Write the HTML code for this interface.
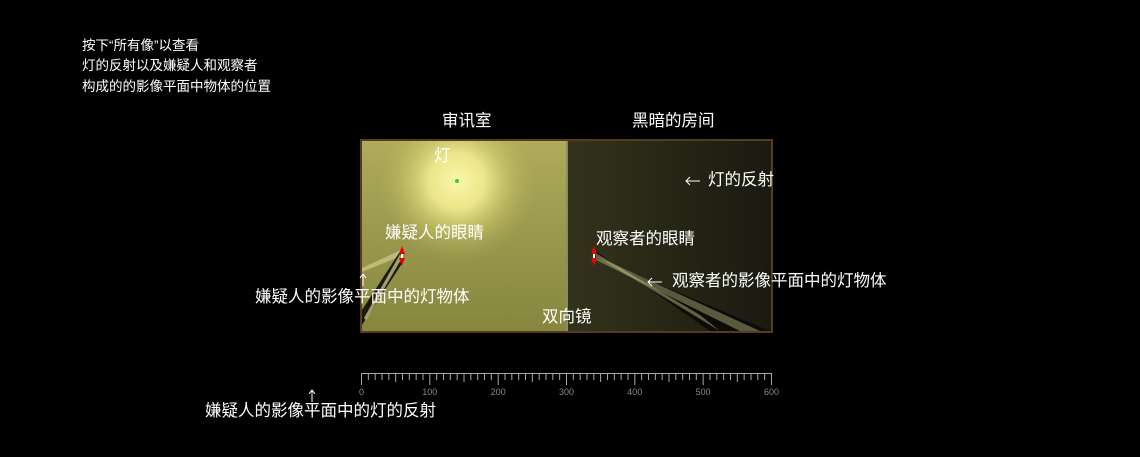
<!DOCTYPE html>
<html><head><meta charset="utf-8"><style>
html,body{margin:0;padding:0;background:#000;width:1140px;height:457px;overflow:hidden}
body{font-family:"Liberation Sans","Noto Sans CJK SC",sans-serif;color:#fff}
</style></head><body>
<svg width="1140" height="457" xmlns="http://www.w3.org/2000/svg" style="position:absolute;left:0;top:0">
<defs>
<radialGradient id="glow" cx="457" cy="181" r="80" gradientUnits="userSpaceOnUse">
<stop offset="0" stop-color="#fbf6a8"/><stop offset="0.35" stop-color="#ebe68a"/><stop offset="0.7" stop-color="#c8c46a" stop-opacity="0.5"/><stop offset="1" stop-color="#b0ad5c" stop-opacity="0"/>
</radialGradient>
<linearGradient id="lp" x1="0" y1="0" x2="0" y2="1">
<stop offset="0" stop-color="#aeab5a"/><stop offset="1" stop-color="#86863f"/>
</linearGradient>
<linearGradient id="rp" x1="0" y1="0" x2="1" y2="0">
<stop offset="0" stop-color="#33331c"/><stop offset="1" stop-color="#1a1a10"/>
</linearGradient>
</defs>
<g font-size="13.5" fill="#fff">
<text x="82" y="50">按下“所有像”以查看</text>
<text x="82" y="70">灯的反射以及嫌疑人和观察者</text>
<text x="82" y="91">构成的的影像平面中物体的位置</text>
</g>
<g font-size="16.5" fill="#fff">
<text x="442" y="126">审讯室</text>
<text x="632" y="126">黑暗的房间</text>
</g>
<rect x="361" y="140" width="411" height="192" fill="#2a1a0e" stroke="#5a3a1e" stroke-width="2"/>
<rect x="362" y="141" width="205" height="190" fill="url(#lp)"/>
<rect x="362" y="141" width="205" height="190" fill="url(#glow)"/>
<rect x="567" y="141" width="204" height="190" fill="url(#rp)"/>
<line x1="567" y1="141" x2="567" y2="331" stroke="#8a8a6a" stroke-width="2"/>
<polygon points="401,250 362,268 362,272 401,256" fill="#d8d69a" opacity="0.6"/>
<polygon points="401,250 362,310 362,325 403,262" fill="#1a1a0c"/>
<polygon points="400,254 364,318 366,320 402,258" fill="#d8d69a" opacity="0.7"/>
<polygon points="594,250 710,331 770,331 596,258" fill="#0c0c06"/>
<polygon points="594,252 700,315 720,331 596,256" fill="#c8c68a" opacity="0.45"/>
<polygon points="596,256 760,331 740,331 596,260" fill="#d0ce90" opacity="0.4"/>
<circle cx="457" cy="181" r="2" fill="#3c3"/>
<g fill="#e00">
<polygon points="402,246 399,254 405,254"/><polygon points="402,266 399,258 405,258"/>
<polygon points="594,246 591,254 597,254"/><polygon points="594,266 591,258 597,258"/>
</g>
<rect x="401" y="254" width="2" height="4" fill="#fff"/><rect x="593" y="254" width="2" height="4" fill="#fff"/>
<g font-size="16.5" fill="#fff">
<text x="434" y="161">灯</text>
<text x="708" y="185">灯的反射</text>
<text x="385" y="238">嫌疑人的眼睛</text>
<text x="596" y="244">观察者的眼睛</text>
<text x="255" y="302">嫌疑人的影像平面中的灯物体</text>
<text x="672" y="286">观察者的影像平面中的灯物体</text>
<text x="542" y="322">双向镜</text>
<text x="205" y="416">嫌疑人的影像平面中的灯的反射</text>
</g>
<g stroke="#fff" stroke-width="1" fill="none">
<path d="M700 181 H686 M690 177 L686 181 L690 185"/>
<path d="M662 282 H648 M652 278 L648 282 L652 286"/>
<path d="M363 286 V274 M360 278 L363 274 L366 278"/>
<path d="M312 402 V390 M309 394 L312 390 L315 394"/>
</g>
<g stroke="#aaa" stroke-width="1" id="ruler">
<line x1="361" y1="373.5" x2="771" y2="373.5"/>
</g>
<g font-size="9" fill="#888" text-anchor="middle">
<text x="361.5" y="395">0</text><text x="429.8" y="395">100</text><text x="498.1" y="395">200</text><text x="566.5" y="395">300</text><text x="634.8" y="395">400</text><text x="703.1" y="395">500</text><text x="771.5" y="395">600</text>
</g>
<script>
var g=document.getElementById('ruler'),ns='http://www.w3.org/2000/svg';
for(var i=0;i<=60;i++){var x=361.5+i*6.833;var l=document.createElementNS(ns,'line');
l.setAttribute('x1',x);l.setAttribute('x2',x);l.setAttribute('y1',373);
l.setAttribute('y2',i%10==0?385:(i%5==0?382:380));g.appendChild(l);}
</script>
</svg>
</body></html>
